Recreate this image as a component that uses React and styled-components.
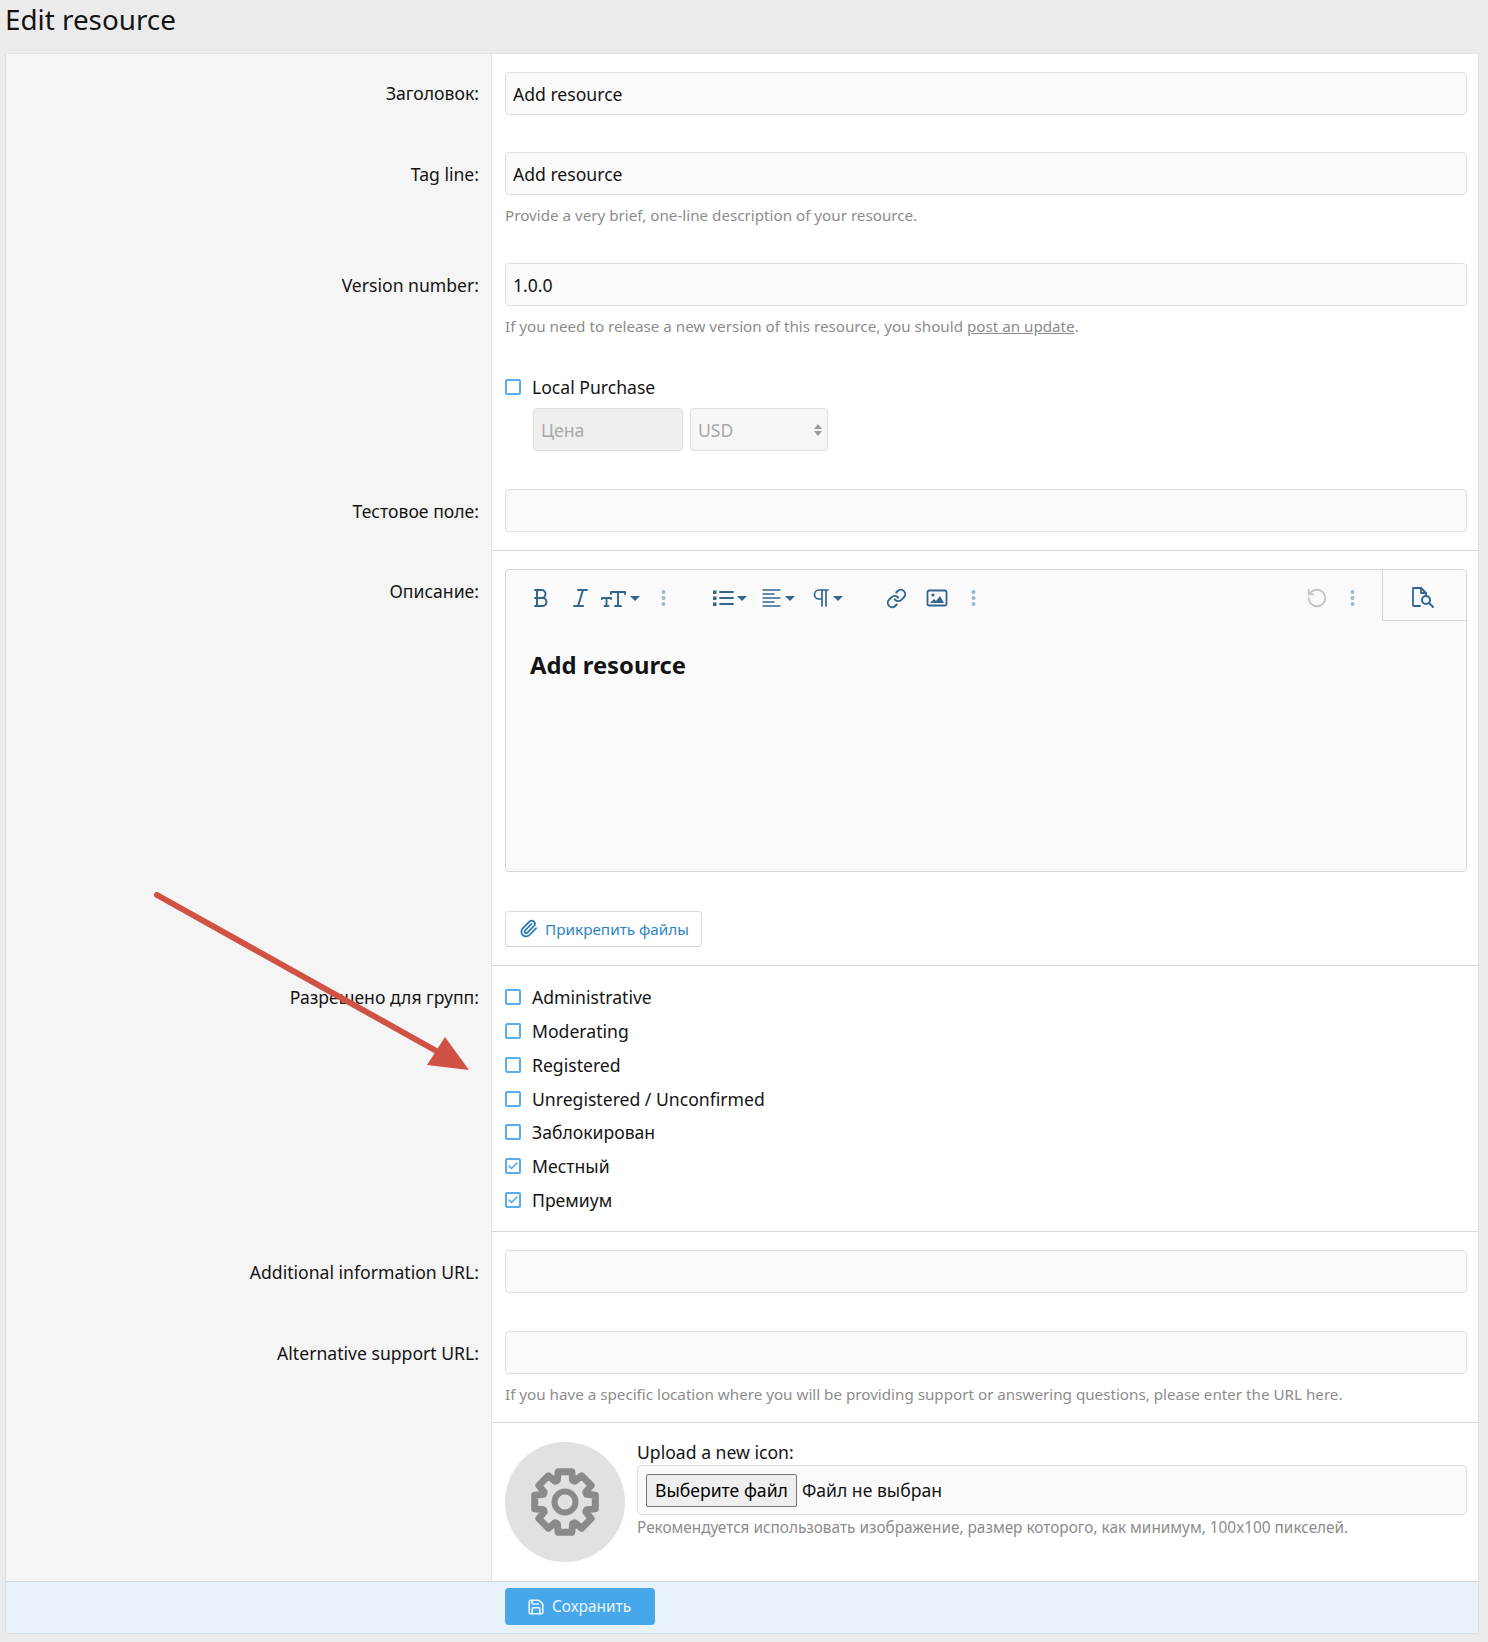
import React from "react";
import styled, { createGlobalStyle } from "styled-components";
import { Check, Link, Paperclip, RotateCcw, Save } from "lucide-react";

const GlobalStyle = createGlobalStyle`
  html, body {
    margin: 0;
    padding: 0;
    background: #ebebeb;
  }
  * {
    box-sizing: border-box;
  }
  body {
    font-family: "Noto Sans", "Open Sans", sans-serif;
    font-size: 17.6px;
    color: #141414;
  }
`;

const Page = styled.div`
  position: relative;
  width: 1488px;
  height: 1642px;
  padding: 0 9px 0 5px;
`;

const Title = styled.h1`
  margin: 0;
  height: 53px;
  padding-top: 1px;
  font-size: 27.8px;
  line-height: 36px;
  font-weight: 400;
`;

const Card = styled.div`
  border: 1px solid #dfdfdf;
  border-top-color: #e4e4e4;
  border-radius: 3px;
  overflow: hidden;
  background: #f5f5f5;
`;

const Row = styled.div`
  display: grid;
  grid-template-columns: 485px 1fr;
`;

const Label = styled.div`
  padding: ${({ $top }) => $top || 28}px 12px 0 0;
  text-align: right;
  line-height: 24px;
`;

const Value = styled.div`
  background: #fff;
  border-left: 1px solid #e7e7e7;
  border-bottom: ${({ $line }) => ($line ? "1px solid #d8d8d8" : "none")};
  padding: ${({ $pad }) => $pad || "18px 11px 19px 13px"};
`;

const TextInput = styled.input`
  display: block;
  width: 100%;
  height: 43px;
  padding: 0 7px;
  border: 1px solid #dfdfdf;
  border-radius: 4px;
  background: #fafafa;
  font: inherit;
  color: #141414;
  outline: none;
`;

const Hint = styled.div`
  margin-top: ${({ $gap }) => $gap ?? 10}px;
  font-size: ${({ $size }) => $size || 15.2}px;
  line-height: 21px;
  color: #8c8c8c;
`;

const HintLink = styled.span`
  text-decoration: underline;
`;

const CheckRow = styled.div`
  display: flex;
  align-items: center;
  gap: 11px;
  height: 33.8px;
`;

const Box = styled.span`
  flex: none;
  display: flex;
  align-items: center;
  justify-content: center;
  width: 16px;
  height: 16px;
  border: 2px solid #57adee;
  border-radius: 2px;
  color: #47a7eb;
`;

const PriceRow = styled.div`
  display: flex;
  gap: 7px;
  margin: 4px 0 0 28px;
`;

const PriceField = styled.div`
  display: flex;
  align-items: center;
  justify-content: space-between;
  width: ${({ $w }) => $w}px;
  height: 43px;
  padding: 1px 8px 0 7px;
  border: 1px solid #dfdfdf;
  border-radius: 4px;
  background: ${({ $shade }) => ($shade ? "#efefef" : "#f7f7f7")};
  color: #a8a8a8;
`;

const SelectArrows = styled.span`
  display: flex;
  flex-direction: column;
  gap: 2px;
  margin-right: -3px;

  &::before,
  &::after {
    content: "";
    border-left: 4px solid transparent;
    border-right: 4px solid transparent;
  }
  &::before {
    border-bottom: 5px solid #9a9a9a;
  }
  &::after {
    border-top: 5px solid #9a9a9a;
  }
`;

const Editor = styled.div`
  height: 303px;
  border: 1px solid #d8d8d8;
  border-radius: 4px;
  background: #fafafa;
`;

const Toolbar = styled.div`
  display: flex;
  height: 51px;
`;

const ToolGroup = styled.div`
  flex: 1;
  display: flex;
  align-items: center;
  padding: 6px 1px 0 23px;
  color: #33658f;
`;

const Tool = styled.span`
  display: flex;
  align-items: center;
  width: ${({ $w }) => $w}px;
  color: ${({ $muted }) => ($muted ? "#c4c4c4" : "inherit")};
`;

const ToolCaret = styled.span`
  margin-left: 3px;
  border-left: 5px solid transparent;
  border-right: 5px solid transparent;
  border-top: 5px solid #33658f;
`;

const ToolSpacer = styled.span`
  flex: 1;
`;

const PreviewTab = styled.div`
  flex: none;
  display: flex;
  align-items: center;
  justify-content: center;
  width: 84px;
  padding: 4px 3px 0 0;
  border-left: 1px solid #d8d8d8;
  border-bottom: 1px solid #d8d8d8;
  color: #33658f;
`;

const EditorBody = styled.div`
  padding: 27px 24px;
  font-size: 23.8px;
  line-height: 34px;
  font-weight: 700;
`;

const AttachButton = styled.div`
  display: inline-flex;
  align-items: center;
  gap: 7px;
  height: 36px;
  margin-top: 39px;
  padding: 0 12px 0 13px;
  border: 1px solid #dcdcdc;
  border-bottom-color: #cfcfcf;
  border-radius: 4px;
  background: #fff;
  color: #2d86c4;
  font-size: 15.3px;
`;

const UploadWrap = styled.div`
  display: flex;
  gap: 12px;
`;

const IconCircle = styled.div`
  flex: none;
  display: flex;
  align-items: center;
  justify-content: center;
  width: 120px;
  height: 120px;
  border-radius: 50%;
  background: #e1e1e1;
  color: #8a8a8a;
`;

const UploadColumn = styled.div`
  flex: 1;
`;

const UploadLabel = styled.div`
  margin: -1px 0 2px;
  line-height: 22px;
`;

const FileField = styled.div`
  display: flex;
  align-items: center;
  gap: 5px;
  height: 50px;
  padding: 1px 8px 0;
  border: 1px solid #dfdfdf;
  border-radius: 4px;
  background: #fafafa;
`;

const FileButton = styled.div`
  height: 33px;
  padding: 0 8px;
  border: 1px solid #767676;
  border-radius: 2px;
  background: #efefef;
  color: #000;
  line-height: 31px;
`;

const FileName = styled.span`
  color: #141414;
`;

const Footer = styled.div`
  height: 52px;
  padding: 6px 0 0 499px;
  border-top: 1px solid #d6d6d6;
  background: #e8f2fb;
`;

const SaveButton = styled.div`
  display: inline-flex;
  align-items: center;
  gap: 7px;
  width: 150px;
  height: 37px;
  padding: 1px 0 0 22px;
  border-radius: 4px;
  background: #47a7eb;
  color: #eaf5fd;
  font-size: 15.4px;
`;

const ArrowOverlay = styled.svg`
  position: absolute;
  left: 0;
  top: 0;
  pointer-events: none;
`;

const ToolIcon = ({ w = 22, h = 22, children, fill = "none" }) => (
  <svg
    width={w}
    height={h}
    viewBox={`0 0 ${w} ${h}`}
    fill={fill}
    stroke="currentColor"
    strokeWidth="1.6"
    strokeLinecap="round"
    strokeLinejoin="round"
  >
    {children}
  </svg>
);

const Dots = () => (
  <svg width="5" height="18" viewBox="0 0 5 18" fill="#9db8cc">
    <circle cx="2.5" cy="3" r="2" />
    <circle cx="2.5" cy="9" r="2" />
    <circle cx="2.5" cy="15" r="2" />
  </svg>
);

// gear outline with eight teeth, worked out around the centre
const gearPath = () => {
  const c = 35;
  const pts = [];
  for (let i = 0; i < 8; i++) {
    const a = (i * Math.PI) / 4 - Math.PI / 2;
    [
      [-0.34, 23],
      [-0.22, 31],
      [0.22, 31],
      [0.34, 23],
    ].forEach(([da, r]) => {
      pts.push(
        `${(c + r * Math.cos(a + da)).toFixed(1)} ${(c + r * Math.sin(a + da)).toFixed(1)}`
      );
    });
  }
  return `M${pts.join("L")}Z`;
};

const Checkbox = ({ checked, children }) => (
  <CheckRow>
    <Box>{checked && <Check size={12} strokeWidth={3} />}</Box>
    {children}
  </CheckRow>
);

const GROUPS = [
  ["Administrative", false],
  ["Moderating", false],
  ["Registered", false],
  ["Unregistered / Unconfirmed", false],
  ["Заблокирован", false],
  ["Местный", true],
  ["Премиум", true],
];

export default function App() {
  return (
    <Page>
      <GlobalStyle />
      <Title>Edit resource</Title>
      <Card>
        <Row>
          <Label $top={27}>Заголовок:</Label>
          <Value>
            <TextInput value="Add resource" readOnly />
          </Value>
        </Row>
        <Row>
          <Label>Tag line:</Label>
          <Value>
            <TextInput value="Add resource" readOnly />
            <Hint>Provide a very brief, one-line description of your resource.</Hint>
          </Value>
        </Row>
        <Row>
          <Label>Version number:</Label>
          <Value>
            <TextInput value="1.0.0" readOnly />
            <Hint>
              If you need to release a new version of this resource, you should{" "}
              <HintLink>post an update</HintLink>.
            </Hint>
          </Value>
        </Row>
        <Row>
          <Label />
          <Value $pad="14px 11px 20px 13px">
            <Checkbox>Local Purchase</Checkbox>
            <PriceRow>
              <PriceField $w={150} $shade>
                Цена
              </PriceField>
              <PriceField $w={138}>
                USD
                <SelectArrows />
              </PriceField>
            </PriceRow>
          </Value>
        </Row>
        <Row>
          <Label>Тестовое поле:</Label>
          <Value $line $pad="18px 11px 18px 13px">
            <TextInput readOnly />
          </Value>
        </Row>
        <Row>
          <Label>Описание:</Label>
          <Value $line $pad="18px 11px 18px 13px">
            <Editor>
              <Toolbar>
                <ToolGroup>
                  <Tool $w={40}>
                    <ToolIcon>
                      <path d="M6 3h6.5a4 4 0 0 1 0 8H6M8 3v16M8 11h5.5a4 4 0 0 1 0 8H6" strokeWidth="2" />
                    </ToolIcon>
                  </Tool>
                  <Tool $w={32}>
                    <ToolIcon>
                      <path d="M9 3h9M5 19h9M14 3L9 19" strokeWidth="2" />
                    </ToolIcon>
                  </Tool>
                  <Tool $w={60}>
                    <ToolIcon w={26}>
                      <path d="M10 5h14M17 5v14M14 19h6M1 11h9M5.5 11v8M3.5 19h4M10 5v2M24 5v2M1 11v1M10 11v1" strokeWidth="1.9" />
                    </ToolIcon>
                    <ToolCaret />
                  </Tool>
                  <Tool $w={51}>
                    <Dots />
                  </Tool>
                  <Tool $w={50}>
                    <ToolIcon>
                      <path d="M8 5h13M8 11h13M8 17h13" strokeWidth="1.8" />
                      <path d="M1 3.5h3.5V7H1zM1 9.5h3.5V13H1zM1 15.5h3.5V19H1z" fill="currentColor" strokeWidth="0" />
                    </ToolIcon>
                    <ToolCaret />
                  </Tool>
                  <Tool $w={50}>
                    <ToolIcon w={20}>
                      <path d="M1 3h17M1 7h11M1 11h17M1 15h11M1 19h17" strokeWidth="1.4" />
                    </ToolIcon>
                    <ToolCaret />
                  </Tool>
                  <Tool $w={74}>
                    <ToolIcon w={18}>
                      <path d="M16 3H7a4.5 4.5 0 0 0 0 9h3M10 3v16M14 3v16" strokeWidth="1.7" />
                    </ToolIcon>
                    <ToolCaret />
                  </Tool>
                  <Tool $w={40}>
                    <Link size={21} strokeWidth={2.2} />
                  </Tool>
                  <Tool $w={45}>
                    <ToolIcon>
                      <rect x="1.5" y="3.5" width="19" height="15" rx="1.5" strokeWidth="1.8" />
                      <path d="M4 16l4-4 2 2 4-5 4 7z" fill="currentColor" strokeWidth="0" />
                      <circle cx="7" cy="8" r="1.6" fill="currentColor" strokeWidth="0" />
                    </ToolIcon>
                  </Tool>
                  <Tool $w={10}>
                    <Dots />
                  </Tool>
                  <ToolSpacer />
                  <Tool $w={44} $muted>
                    <RotateCcw size={22} strokeWidth={2} />
                  </Tool>
                  <Tool $w={31}>
                    <Dots />
                  </Tool>
                </ToolGroup>
                <PreviewTab>
                  <svg width="24" height="22" viewBox="0 0 24 22" fill="none" stroke="currentColor" strokeWidth="1.8" strokeLinejoin="round" strokeLinecap="round">
                    <path d="M9 20H3a1 1 0 0 1-1-1V2h8l5 5v2" />
                    <path d="M10 2v5h5" />
                    <circle cx="15" cy="14" r="4" strokeWidth="2" />
                    <path d="M18 17l4 4" strokeWidth="2" />
                  </svg>
                </PreviewTab>
              </Toolbar>
              <EditorBody>Add resource</EditorBody>
            </Editor>
            <AttachButton>
              <Paperclip size={19} strokeWidth={2.2} color="#2577b1" />
              Прикрепить файлы
            </AttachButton>
          </Value>
        </Row>
        <Row>
          <Label $top={19}>Разрешено для групп:</Label>
          <Value $line $pad="14.5px 11px 14px 13px">
            {GROUPS.map(([name, checked]) => (
              <Checkbox key={name} checked={checked}>
                {name}
              </Checkbox>
            ))}
          </Value>
        </Row>
        <Row>
          <Label>Additional information URL:</Label>
          <Value $pad="18px 11px 20px 13px">
            <TextInput readOnly />
          </Value>
        </Row>
        <Row>
          <Label>Alternative support URL:</Label>
          <Value $line $pad="18px 11px 17px 13px">
            <TextInput readOnly />
            <Hint>
              If you have a specific location where you will be providing support or
              answering questions, please enter the URL here.
            </Hint>
          </Value>
        </Row>
        <Row>
          <Label />
          <Value $pad="19px 11px 19px 13px">
            <UploadWrap>
              <IconCircle>
                <svg width="70" height="70" viewBox="0 0 70 70" fill="none" stroke="currentColor" strokeWidth="7" strokeLinejoin="round">
                  <path d={gearPath()} />
                  <circle cx="35" cy="35" r="10.5" strokeWidth="6" />
                </svg>
              </IconCircle>
              <UploadColumn>
                <UploadLabel>Upload a new icon:</UploadLabel>
                <FileField>
                  <FileButton>Выберите файл</FileButton>
                  <FileName>Файл не выбран</FileName>
                </FileField>
                <Hint $gap={2} $size={15.35}>
                  Рекомендуется использовать изображение, размер которого, как минимум,
                  100x100 пикселей.
                </Hint>
              </UploadColumn>
            </UploadWrap>
          </Value>
        </Row>
        <Footer>
          <SaveButton>
            <Save size={18} strokeWidth={2.2} />
            Сохранить
          </SaveButton>
        </Footer>
      </Card>
      <ArrowOverlay width="1488" height="1642" viewBox="0 0 1488 1642">
        <path d="M157 895L440 1053" stroke="#d05244" strokeWidth="6" strokeLinecap="round" />
        <path d="M427 1065L469 1070L445 1037Z" fill="#d05244" />
      </ArrowOverlay>
    </Page>
  );
}
